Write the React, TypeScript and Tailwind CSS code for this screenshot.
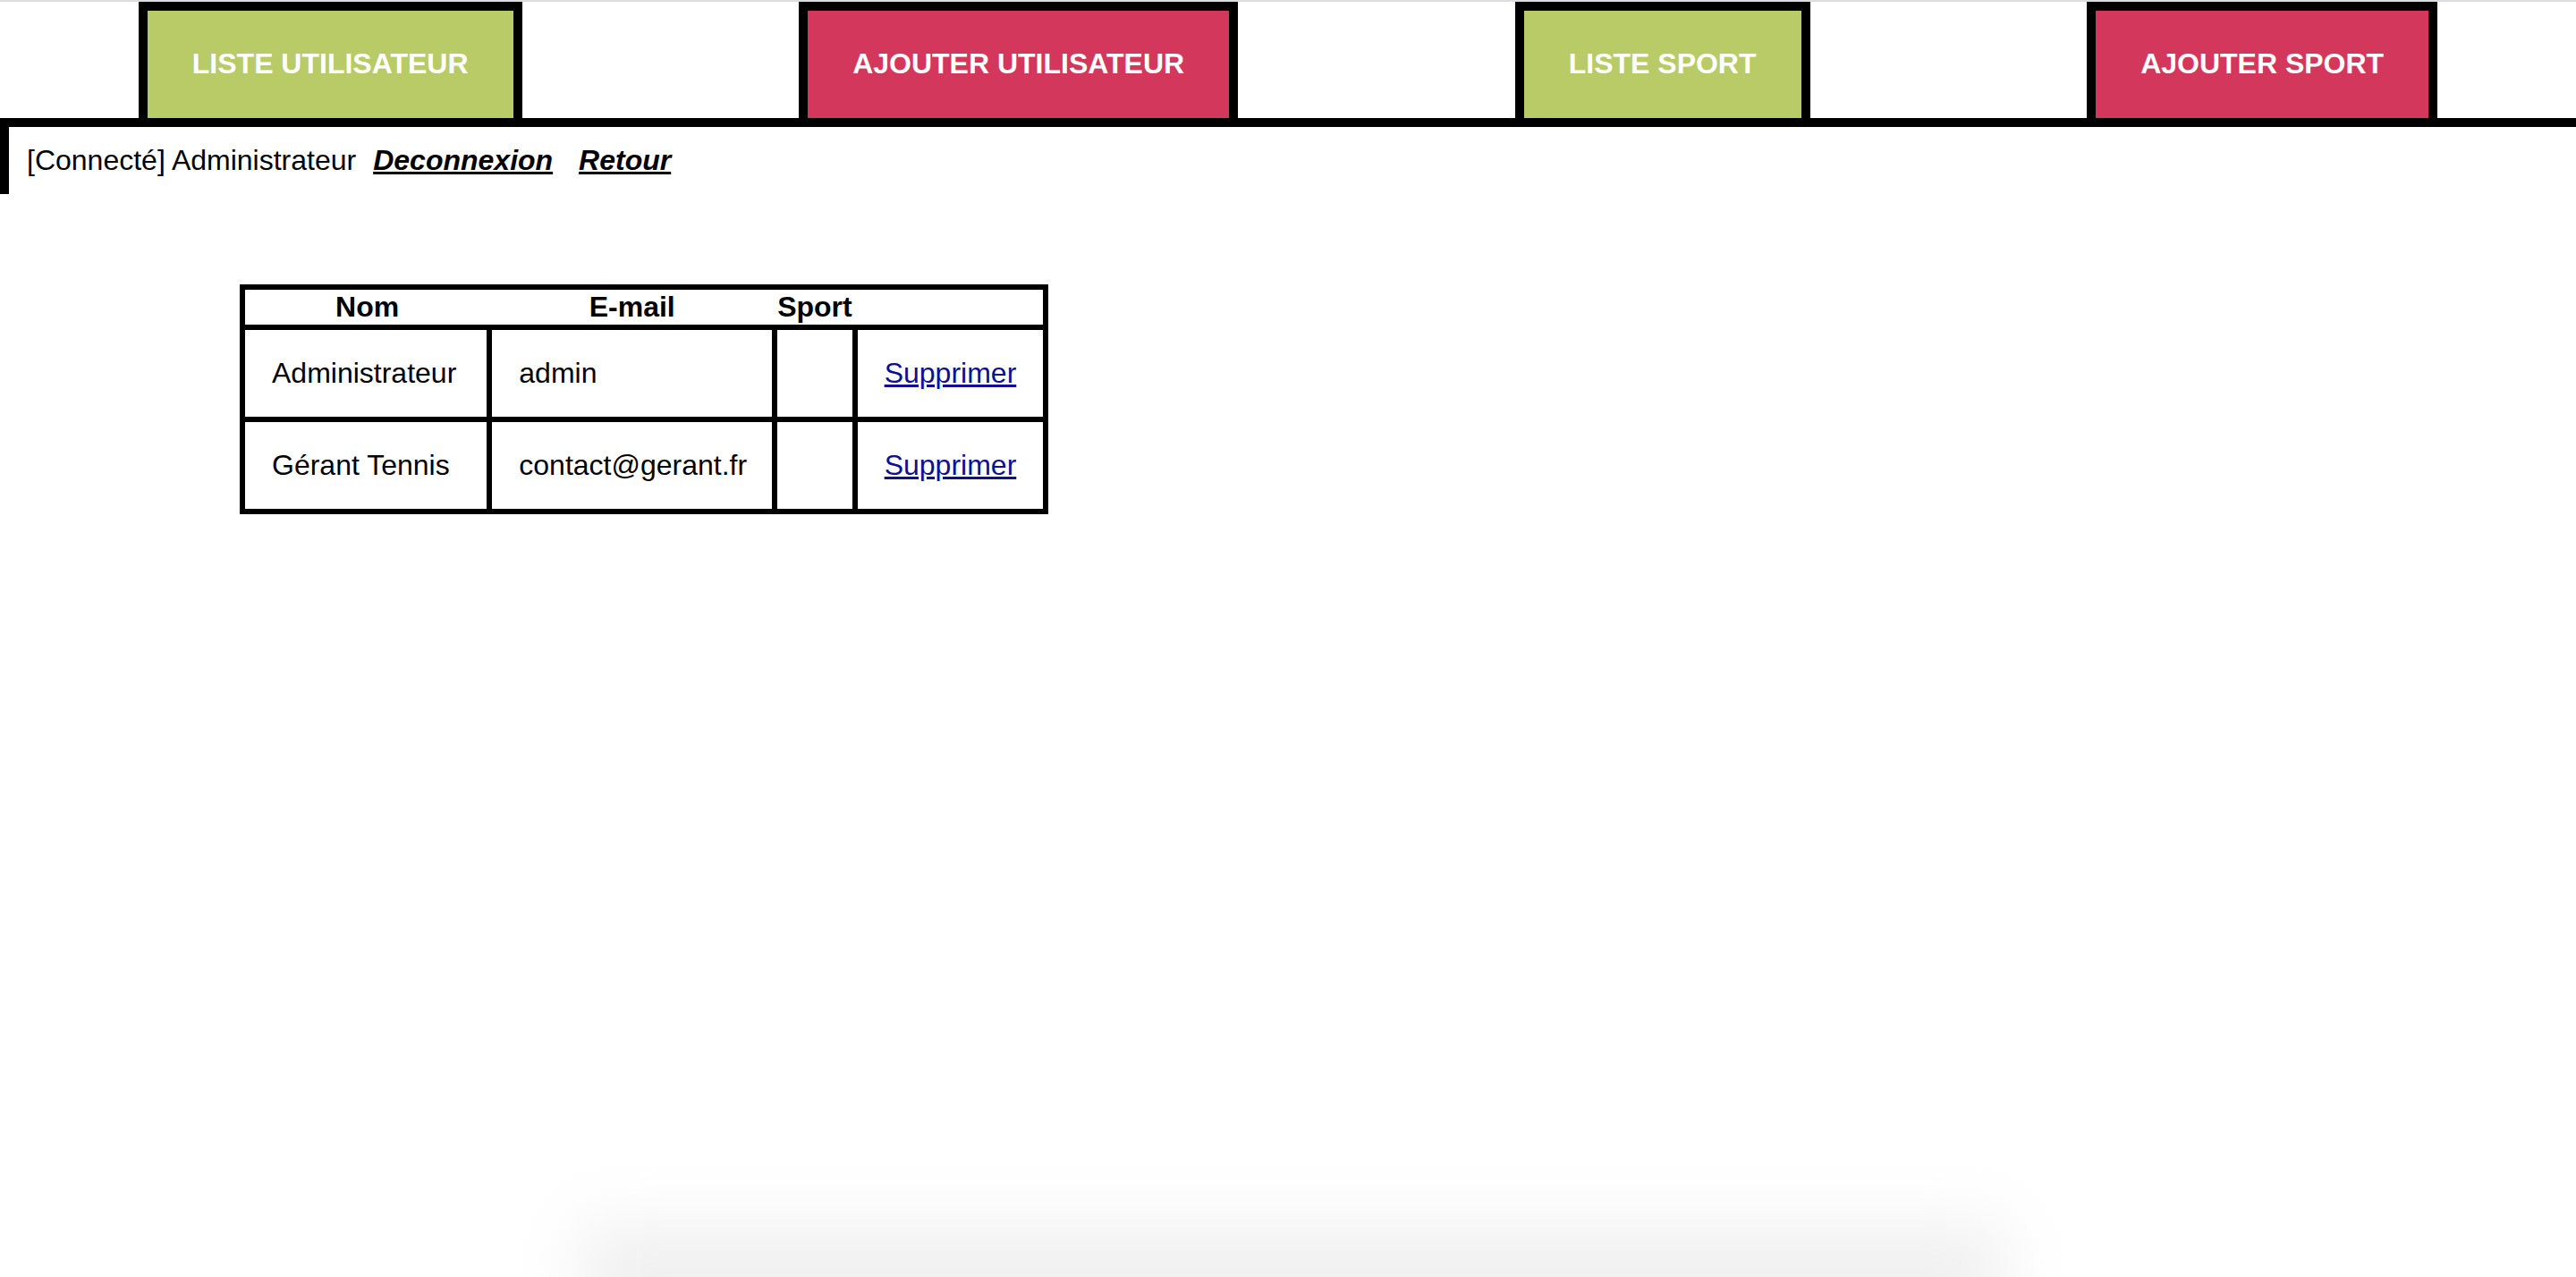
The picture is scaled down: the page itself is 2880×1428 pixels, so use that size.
import React from "react";

const font = { fontFamily: '"Liberation Sans", Arial, sans-serif' };

function NavButton({ label, color }: { label: string; color: "green" | "red" }) {
  return (
    <a
      href="#"
      className={
        "flex h-[130px] items-center border-x-[10px] border-t-[10px] border-black px-[50px] pb-[3px] text-[32px] font-bold text-white no-underline " +
        (color === "green" ? "bg-[#b8cb66]" : "bg-[#d3375b]")
      }
    >
      {label}
    </a>
  );
}

export default function App() {
  return (
    <div className="relative h-[1428px] overflow-hidden bg-white text-black" style={font}>
      <div className="h-[2px] bg-[#dcdce1]" />
      <nav className="flex justify-around border-b-[10px] border-black">
        <NavButton label="LISTE UTILISATEUR" color="green" />
        <NavButton label="AJOUTER UTILISATEUR" color="red" />
        <NavButton label="LISTE SPORT" color="green" />
        <NavButton label="AJOUTER SPORT" color="red" />
      </nav>
      <div className="flex border-l-[10px] border-black py-[19px] pl-[20px] text-[32px] leading-[normal]">
        <span>[Connecté] Administrateur</span>
        <a href="#" className="ml-[19px] font-bold italic text-black underline">
          Deconnexion
        </a>
        <a href="#" className="ml-[29px] font-bold italic text-black underline">
          Retour
        </a>
      </div>
      <table className="ml-[268px] mt-[101px] border-separate border-spacing-0 border-[3px] border-black text-[32px] leading-[normal]">
        <thead>
          <tr>
            <th className="border-y-[3px] border-l-[3px] border-black px-[2px] py-[1px] font-bold">Nom</th>
            <th className="border-y-[3px] border-black px-[2px] py-[1px] font-bold">E-mail</th>
            <th className="border-y-[3px] border-black px-[3px] py-[1px] font-bold">Sport</th>
            <th className="border-y-[3px] border-r-[3px] border-black px-[2px] py-[1px]"></th>
          </tr>
        </thead>
        <tbody>
          {[
            ["Administrateur", "admin"],
            ["Gérant Tennis", "contact@gerant.fr"],
          ].map(([nom, mail]) => (
            <tr key={nom}>
              <td className="border-[3px] border-black py-[30px] pl-[30px] pr-[34px]">{nom}</td>
              <td className="border-[3px] border-black py-[30px] pl-[30px] pr-[28px]">{mail}</td>
              <td className="border-[3px] border-black p-[30px]"></td>
              <td className="border-[3px] border-black py-[30px] pl-[30px] pr-[30px]">
                <a href="#" className="text-[#0f0f8f] underline">
                  Supprimer
                </a>
              </td>
            </tr>
          ))}
        </tbody>
      </table>
      <div className="pointer-events-none absolute bottom-[-60px] left-[650px] h-[120px] w-[1590px] bg-[#f0f0f0] blur-[36px]" />
    </div>
  );
}
